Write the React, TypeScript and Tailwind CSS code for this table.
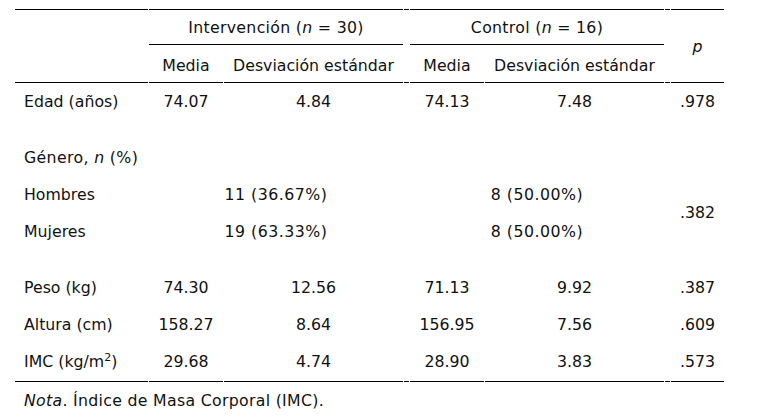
import React from "react";

const rows = [
  { label: "Edad (años)", m1: "74.07", d1: "4.84", m2: "74.13", d2: "7.48", p: ".978" },
];

const bodyRows = [
  { label: "Peso (kg)", m1: "74.30", d1: "12.56", m2: "71.13", d2: "9.92", p: ".387" },
  { label: "Altura (cm)", m1: "158.27", d1: "8.64", m2: "156.95", d2: "7.56", p: ".609" },
];

function DataRow({ r, last }: { r: any; last?: boolean }) {
  const b = last ? " border-b border-black" : "";
  return (
    <tr className="h-[37px]">
      <td className={"pl-[9px] text-left whitespace-nowrap" + b}>{r.label}</td>
      <td className={"text-center" + b}>{r.m1}</td>
      <td className={"text-center" + b}>{r.d1}</td>
      <td className={b}></td>
      <td className={"text-center" + b}>{r.m2}</td>
      <td className={"text-center" + b}>{r.d2}</td>
      <td className={b}></td>
      <td className={"text-center" + b}>{r.p}</td>
    </tr>
  );
}

export default function App() {
  return (
    <div className="w-[775px] h-[417px] bg-white pt-[9px] pl-[14px] overflow-hidden">
      <table
        className="table-fixed border-separate border-spacing-x-px border-spacing-y-0 text-[15.75px] leading-[18px] text-[#111]"
        style={{ fontFamily: '"DejaVu Sans", Verdana, sans-serif' }}
      >
        <colgroup>
          <col className="w-[133px]" />
          <col className="w-[74px]" />
          <col className="w-[179px]" />
          <col className="w-[5px]" />
          <col className="w-[74px]" />
          <col className="w-[179px]" />
          <col className="w-[5px]" />
          <col className="w-[53px]" />
        </colgroup>
        <thead>
          <tr className="h-[36px]">
            <th rowSpan={2} className="border-t border-b border-black font-normal"></th>
            <th colSpan={2} className="border-t border-b border-black font-normal text-center whitespace-nowrap tracking-[0.3px]">
              <span className="relative top-[1px]">
                Intervención (<i>n</i> = 30)
              </span>
            </th>
            <th className="border-t border-black"></th>
            <th colSpan={2} className="border-t border-b border-black font-normal text-center whitespace-nowrap tracking-[0.3px]">
              <span className="relative top-[1px]">
                Control (<i>n</i> = 16)
              </span>
            </th>
            <th className="border-t border-black"></th>
            <th rowSpan={2} className="border-t border-b border-black font-normal text-center italic">
              <span className="relative top-[1px]">p</span>
            </th>
          </tr>
          <tr className="h-[38px]">
            <th className="border-b border-black font-normal text-center">
              <span className="relative top-[2px]">Media</span>
            </th>
            <th className="border-b border-black font-normal text-center whitespace-nowrap">
              <span className="relative top-[2px]">Desviación estándar</span>
            </th>
            <th className="border-b border-black"></th>
            <th className="border-b border-black font-normal text-center">
              <span className="relative top-[2px]">Media</span>
            </th>
            <th className="border-b border-black font-normal text-center whitespace-nowrap">
              <span className="relative top-[2px]">Desviación estándar</span>
            </th>
            <th className="border-b border-black"></th>
          </tr>
        </thead>
        <tbody>
          {rows.map(r => (
            <DataRow key={r.label} r={r} />
          ))}
          <tr className="h-[19px]">
            <td colSpan={8}></td>
          </tr>
          <tr className="h-[37px]">
            <td className="pl-[9px] whitespace-nowrap tracking-[0.35px]">
              Género, <i>n</i> (%)
            </td>
            <td colSpan={7}></td>
          </tr>
          <tr className="h-[37px]">
            <td className="pl-[9px]">Hombres</td>
            <td colSpan={2} className="text-center tracking-[0.5px]">11 (36.67%)</td>
            <td></td>
            <td colSpan={2} className="text-center tracking-[0.5px]">8 (50.00%)</td>
            <td></td>
            <td rowSpan={2} className="text-center">.382</td>
          </tr>
          <tr className="h-[37px]">
            <td className="pl-[9px]">Mujeres</td>
            <td colSpan={2} className="text-center tracking-[0.5px]">19 (63.33%)</td>
            <td></td>
            <td colSpan={2} className="text-center tracking-[0.5px]">8 (50.00%)</td>
            <td></td>
          </tr>
          <tr className="h-[19px]">
            <td colSpan={8}></td>
          </tr>
          {bodyRows.map(r => (
            <DataRow key={r.label} r={r} />
          ))}
          <tr className="h-[39px]">
            <td className="pl-[9px] whitespace-nowrap border-b border-black">
              IMC (kg/m<sup className="text-[11px] align-baseline relative -top-[6px]">2</sup>)
            </td>
            <td className="text-center border-b border-black">29.68</td>
            <td className="text-center border-b border-black">4.74</td>
            <td className="border-b border-black"></td>
            <td className="text-center border-b border-black">28.90</td>
            <td className="text-center border-b border-black">3.83</td>
            <td className="border-b border-black"></td>
            <td className="text-center border-b border-black">.573</td>
          </tr>
          <tr className="h-[38px]">
            <td colSpan={8} className="pl-[9px] whitespace-nowrap tracking-[0.3px]">
              <i>Nota</i>. Índice de Masa Corporal (IMC).
            </td>
          </tr>
        </tbody>
      </table>
    </div>
  );
}
